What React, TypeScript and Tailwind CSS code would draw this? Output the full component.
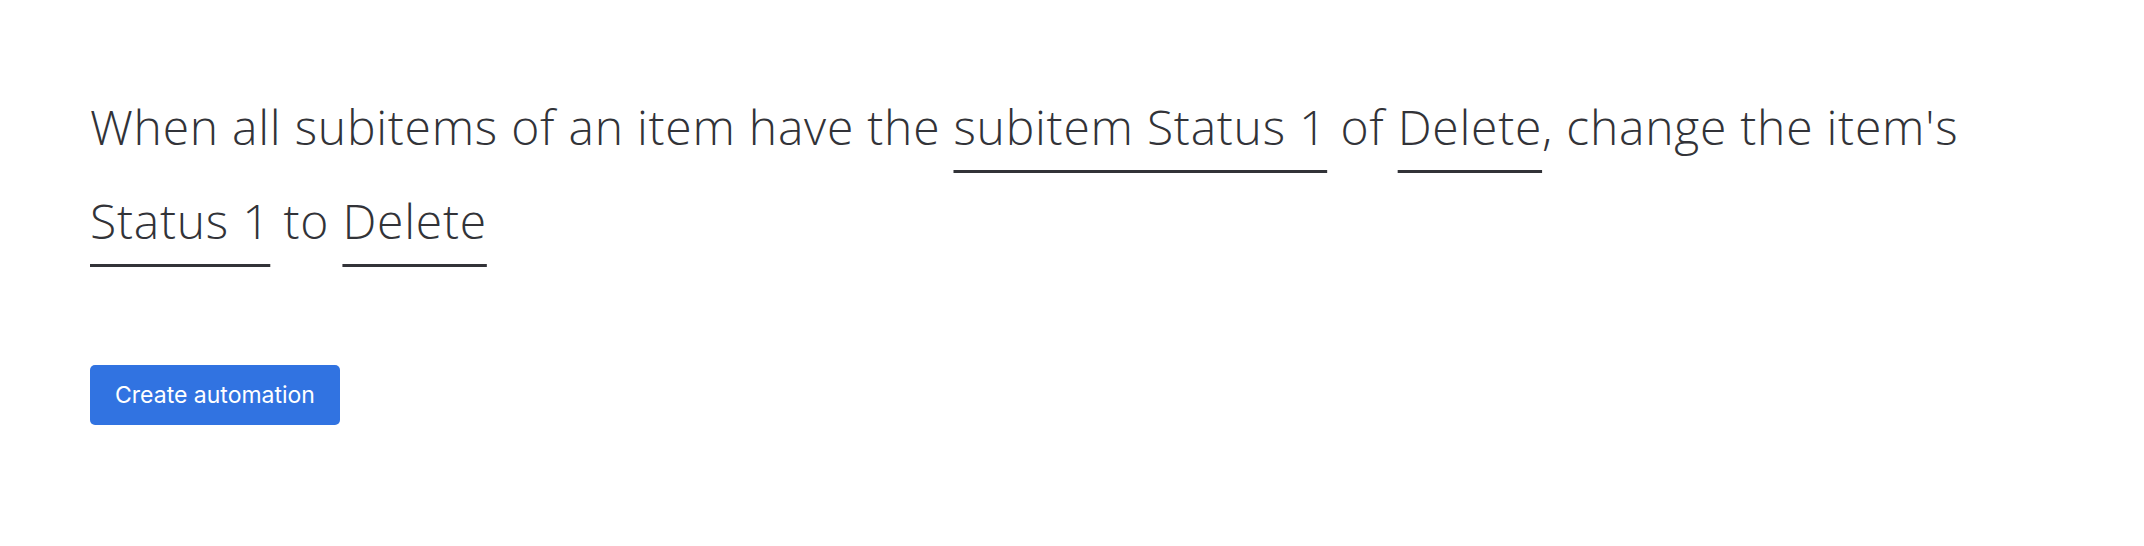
import React from "react";

const Pick = ({ children }: { children: React.ReactNode }) => (
  <span className="whitespace-nowrap underline decoration-[3px] underline-offset-[25px] decoration-[#323338]">{children}</span>
);

export default function App() {
  return (
    <div className="min-h-[546px] bg-white px-[90px] pt-[80px]" style={{ fontFamily: '"Open Sans", sans-serif' }}>
      <p className="max-w-[1960px] text-[48px] leading-[94px] tracking-[0.75px] text-[#323338] font-light">
        When all subitems of an item have the <Pick>subitem Status 1</Pick> of <Pick>Delete</Pick>, change the item's{" "}
        <Pick>Status 1</Pick> to <Pick>Delete</Pick>
      </p>
      <button
        className="mt-[97px] h-[60px] w-[250px] rounded-[5px] bg-[#3173e1] text-[23px] text-white"
        style={{ fontFamily: 'Inter, sans-serif' }}
      >
        Create automation
      </button>
    </div>
  );
}
